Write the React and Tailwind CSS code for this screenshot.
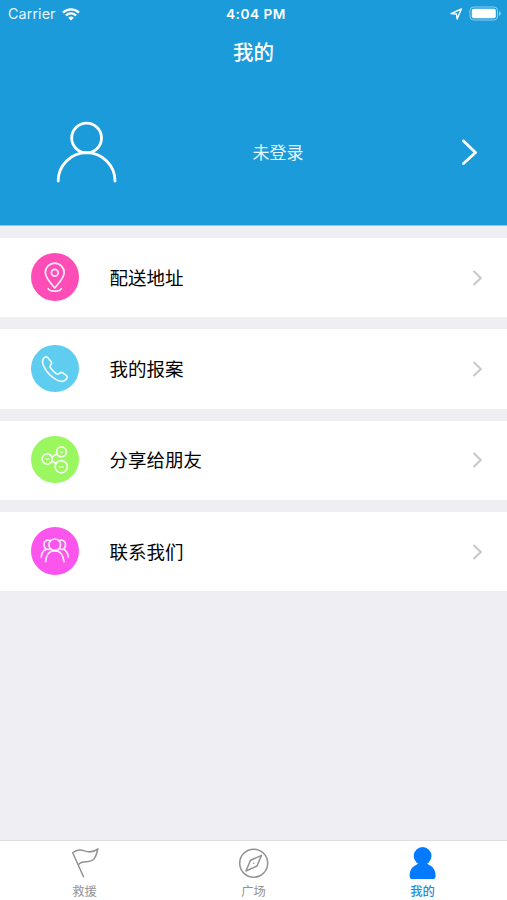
function WifiIcon() {
  return (
    <svg className="h-[13px] w-[18px]" viewBox="0 0 18 13" fill="none" stroke="#fff" strokeWidth="2.3">
      <path d="M1 4.6a11.4 11.4 0 0 1 16 0" />
      <path d="M3.9 7.5a7.3 7.3 0 0 1 10.2 0" />
      <path d="M6.2 9.8a4 4 0 0 1 5.6 0L9 12.6z" fill="#fff" stroke="none" />
    </svg>
  );
}

function StatusBar() {
  return (
    <div className="grid h-7 grid-cols-3 items-center pl-2 pr-[6px] text-white">
      <div className="flex items-center gap-[6px]">
        <span className="text-[14.3px] leading-7 tracking-[0.1px] opacity-90">Carrier</span>
        <WifiIcon />
      </div>
      <span className="pl-[3px] text-center text-[13.7px] font-semibold leading-7 tracking-[0.5px]">4:04 PM</span>
      <div className="flex items-center justify-end gap-[6px]">
        <svg className="h-[13px] w-[13px]" viewBox="0 0 13 13" fill="none" stroke="#fff" strokeWidth="1.4" strokeLinejoin="round">
          <path d="M1 5.6 11.4 1 7.1 11 6.5 6z" />
        </svg>
        <svg className="mb-[2px] h-[15px] w-[32px]" viewBox="0 0 32 15" fill="none">
          <rect x="1" y="1" width="27.5" height="13" rx="3.5" stroke="#fff" strokeOpacity=".5" />
          <rect x="2.8" y="2.8" width="24" height="9.4" rx="2" fill="#fff" />
          <path d="M30 5.2q1.7.6 1.7 2.3T30 9.8z" fill="#fff" fillOpacity=".55" />
        </svg>
      </div>
    </div>
  );
}

function PinIcon() {
  return (
    <>
      <path d="M24 35.3c-2.4-3.3-9.5-9.5-9.5-15.6a9.5 9.5 0 0 1 19 0c0 6.1-7.1 12.3-9.5 15.6z" />
      <circle cx="24" cy="20" r="3.4" />
      <path d="M17.3 36c1 1.8 3.6 2.5 6.7 2.5s5.7-.7 6.7-2.5" />
    </>
  );
}

function PhoneIcon() {
  return (
    <path d="M12.6 13.6C13.5 12.300 15.400 11.300 16.600 12.400L20.400 17C21.300 18.200 20.800 19.300 19.900 20.300C19 21.400 19.200 22.400 20.200 23.700C21.500 25.500 23.600 27.600 25.500 28.900C26.800 29.700 27.700 29.500 28.700 28.600C29.700 27.700 30.900 27.300 32 28.100L36 31C37.300 32 36.400 33.800 35.200 35C32.800 37.600 29.700 37.200 26.500 35.500C21.500 32.900 16 27.400 13.200 22C11.400 18.600 11 15.900 12.600 13.600Z" />
  );
}

function ShareIcon() {
  return (
    <>
      <circle cx="16.4" cy="23.3" r="5.2" />
      <circle cx="30.8" cy="16" r="5" />
      <circle cx="30.6" cy="31" r="6.2" />
      <path d="m21.100 21 5.200-2.700M21.200 25.500l4 2.300" />
      <path d="m14.800 23 1.600.7 1.600-.7M29.400 16.200l1.300.5 1.400-.5M28.600 31.200l2 .4 2.100-.4" strokeWidth="1.100" />
    </>
  );
}

function PeopleIcon() {
  return (
    <>
      <circle cx="24" cy="18" r="5.9" />
      <path d="M14.700 35c.6-7 4.300-11.100 9.300-11.100s8.700 4.100 9.300 11.100" />
      <path d="M19 13.600c-3.200-1.200-5.900.8-5.900 4.100 0 2 .9 3.700 2.400 4.500-3 1.400-4.900 4.100-5.100 8.200M15.500 22.200c1 .5 2.100.6 3.100.2M29 13.600c3.200-1.200 5.900.8 5.900 4.100 0 2-.9 3.700-2.400 4.500 3 1.400 4.900 4.100 5.100 8.200M32.500 22.200c-1 .5-2.100.6-3.100.2" />
    </>
  );
}

const MENU_ITEMS = [
  { label: '配送地址', color: 'bg-[#ff4db8]', icon: PinIcon },
  { label: '我的报案', color: 'bg-[#5fcdf0]', icon: PhoneIcon },
  { label: '分享给朋友', color: 'bg-[#9bf75f]', icon: ShareIcon },
  { label: '联系我们', color: 'bg-[#fb55ee]', icon: PeopleIcon },
];

function MenuRow({ item }) {
  const Icon = item.icon;

  return (
    <button type="button" className="flex h-[79.3px] w-full shrink-0 items-center bg-white pl-[31px] pr-6 text-left">
      <span className={`mb-px h-[47.5px] w-[47.5px] shrink-0 rounded-full ${item.color}`}>
        <svg className="h-full w-full" viewBox="0 0 48 48" fill="none" stroke="#fff" strokeOpacity=".9" strokeWidth="1.7" strokeLinecap="round" strokeLinejoin="round">
          <Icon />
        </svg>
      </span>
      <span className="ml-[31px] flex-1 text-[18.5px] leading-7 text-black">{item.label}</span>
      <svg className="h-4 w-[11px]" viewBox="0 0 11 16" fill="none" stroke="#c7c7cc" strokeWidth="2">
        <path d="m1.500 1 7.300 7-7.300 7" />
      </svg>
    </button>
  );
}

function FlagIcon() {
  return (
    <svg className="h-8 w-8" viewBox="0 0 32 32" fill="none" stroke="#929292" strokeWidth="1.5" strokeLinecap="round" strokeLinejoin="round">
      <path d="M14.500 29.700 3.700 5.800C7.500 2.300 11.500 2.500 15.500 3.900S24 5.900 29 1.900C27.500 4.800 28 9.300 24.600 12.500C19 17.300 14 11.800 9.300 17.800" />
    </svg>
  );
}

function CompassIcon() {
  return (
    <svg className="h-8 w-8" viewBox="0 0 32 32" fill="none" stroke="#929292" strokeWidth="1.5" strokeLinejoin="round">
      <circle cx="15.700" cy="16.200" r="14" />
      <path d="m23.500 8.400-4.500 10.600-11 5 4.500-10.700z" />
      <circle cx="15.700" cy="16.200" r=".8" fill="#929292" stroke="none" />
    </svg>
  );
}

function UserIcon() {
  return (
    <svg className="h-8 w-8" viewBox="0 0 32 32" fill="#047aff">
      <circle cx="15.600" cy="9" r="8.900" />
      <path d="M11.500 15.500h8.200c1 1.800 2.300 2.500 4 3.300 3.200 1.700 4.900 5.500 4.900 10.200 0 2-1 3.100-3 3.100h-20c-2 0-3-1.100-3-3.100 0-4.700 1.700-8.500 4.900-10.200 1.700-.8 3-1.500 4-3.300z" />
    </svg>
  );
}

const TABS = [
  { label: '救援', icon: FlagIcon, color: 'text-[#929292]' },
  { label: '广场', icon: CompassIcon, color: 'text-[#929292]' },
  { label: '我的', icon: UserIcon, color: 'text-[#1a8fe0] font-medium' },
];

function TabBar() {
  return (
    <nav className="grid h-[60px] grid-cols-3 border-t border-[#dedee1] bg-white">
      {TABS.map(({ label, icon: Icon, color }) => (
        <button key={label} type="button" className={`flex flex-col items-center pt-[6px] ${color}`}>
          <Icon />
          <span className="mt-[5px] text-[12.3px] leading-4">{label}</span>
        </button>
      ))}
    </nav>
  );
}

export default function App() {
  return (
    <div className="flex h-[900px] w-[507px] flex-col overflow-hidden bg-[#eeeef3] font-['Inter','Noto_Sans_CJK_SC',sans-serif]">
      <header className="h-[226px] shrink-0 border-b border-[#8bcbed] bg-[#1c9bdb] text-white">
        <StatusBar />
        <h1 className="mt-[9px] text-center text-[20.5px] font-medium leading-8">我的</h1>
        <div className="mt-[51px] flex h-16 items-center pl-[55px] pr-[29px]">
          <svg className="h-16 w-16 shrink-0" viewBox="0 0 64 64" fill="none" stroke="#fff" strokeWidth="2.8" strokeLinecap="round">
            <circle cx="31.600" cy="18" r="14.900" />
            <path d="M3.200 61a28.400 28.400 0 0 1 56.800 0" />
          </svg>
          <span className="flex-1 pr-6 pt-[2px] text-center text-[17px] leading-7 opacity-90">未登录</span>
          <svg className="h-[26px] w-[17px]" viewBox="0 0 17 26" fill="none" stroke="#fff" strokeWidth="2.8" strokeLinecap="round" strokeLinejoin="round">
            <path d="m2.500 2 12 11.500-12 11" />
          </svg>
        </div>
      </header>
      <main className="flex flex-1 flex-col gap-[12px] pt-[12px]">
        {MENU_ITEMS.map((item) => (
          <MenuRow key={item.label} item={item} />
        ))}
      </main>
      <TabBar />
    </div>
  );
}
